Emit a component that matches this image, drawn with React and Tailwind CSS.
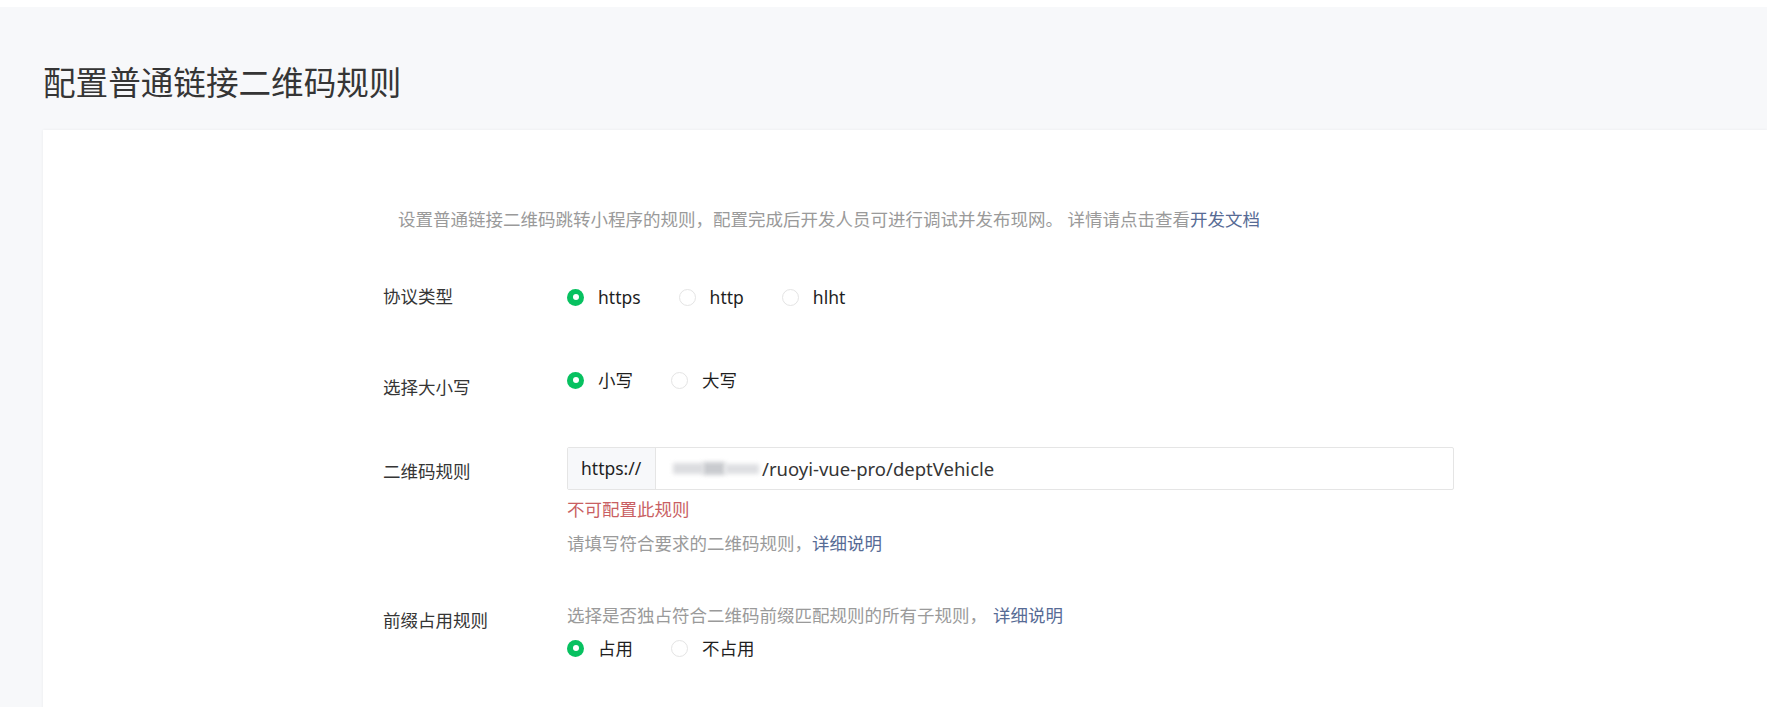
import React from "react";

const FONT = {
  fontFamily:
    '"Noto Sans", "Noto Sans CJK SC", "Microsoft YaHei", sans-serif',
};

function Radio({ checked, label }) {
  return (
    <label className="flex items-center gap-[14px] cursor-pointer">
      {checked ? (
        <span className="w-[17px] h-[17px] rounded-full bg-[#07c160] flex items-center justify-center">
          <span className="w-[6px] h-[6px] rounded-full bg-white" />
        </span>
      ) : (
        <span className="w-[17px] h-[17px] rounded-full border border-[#e4e4e4] bg-white" />
      )}
      <span className="text-[17.5px] leading-[24px] text-[#1f1f1f]">{label}</span>
    </label>
  );
}

function Label({ children, className = "" }) {
  return (
    <div
      className={
        "w-[184px] shrink-0 text-[17.5px] leading-[24px] text-[#353535] " +
        className
      }
    >
      {children}
    </div>
  );
}

export default function App() {
  return (
    <div className="bg-white min-h-screen" style={FONT}>
      <div className="mt-[7px] bg-[#f7f8fa] min-h-[700px] flex flex-col">
        <h1 className="pl-[43px] pt-[53px] text-[32.6px] leading-[46px] font-normal text-[#353535]">
          配置普通链接二维码规则
        </h1>
        <div className="ml-[43px] mt-[24px] flex-1 bg-white shadow-[0_0_3px_rgba(0,0,0,0.06)] pl-[340px] pt-[77px] pb-[60px]">
          <p className="ml-[15px] text-[17.5px] leading-[24px] text-[#9a9a9a]">
            设置普通链接二维码跳转小程序的规则，配置完成后开发人员可进行调试并发布现网。
            详情请点击查看<a className="text-[#576b95]">开发文档</a>
          </p>

          <div className="mt-[54px] flex items-center">
            <Label className="-mt-[3px]">协议类型</Label>
            <div className="flex items-center gap-[38px]">
              <Radio checked label="https" />
              <Radio label="http" />
              <Radio label="hlht" />
            </div>
          </div>

          <div className="mt-[59px] flex items-start">
            <Label className="mt-[7px]">选择大小写</Label>
            <div className="flex items-center gap-[38px]">
              <Radio checked label="小写" />
              <Radio label="大写" />
            </div>
          </div>

          <div className="mt-[48px] flex items-start">
            <Label className="mt-[12px]">二维码规则</Label>
            <div className="flex flex-col">
              <div className="w-[887px] h-[43px] flex border border-[#e5e5e5] rounded-[2px] bg-white">
                <div className="w-[88px] shrink-0 bg-[#f7f8fa] border-r border-[#e5e5e5] flex items-center pl-[13px] text-[17.5px] text-[#1f1f1f]">
                  https://
                </div>
                <div className="flex items-center pl-[13px] text-[18.5px] text-[#353535]">
                  <span className="relative inline-block w-[92px] h-[20px] mr-[1px]">
                    <span className="absolute left-[4px] top-[4px] w-[30px] h-[11px] bg-[#dcdde0] blur-[2px]" />
                    <span className="absolute left-[34px] top-[3px] w-[22px] h-[13px] bg-[#c9cbcf] blur-[2px]" />
                    <span className="absolute left-[56px] top-[5px] w-[34px] h-[10px] bg-[#dedfe2] blur-[2px]" />
                  </span>
                  <span>/ruoyi-vue-pro/deptVehicle</span>
                </div>
              </div>
              <div className="mt-[7px] text-[17.5px] leading-[24px] text-[#c95f63]">
                不可配置此规则
              </div>
              <div className="mt-[10px] text-[17.5px] leading-[24px] text-[#9a9a9a]">
                请填写符合要求的二维码规则，<a className="text-[#576b95]">详细说明</a>
              </div>
            </div>
          </div>

          <div className="mt-[48px] flex items-start">
            <Label className="mt-[5px]">前缀占用规则</Label>
            <div className="flex flex-col">
              <div className="text-[17.5px] leading-[24px] text-[#9a9a9a]">
                选择是否独占符合二维码前缀匹配规则的所有子规则，
                <a className="ml-[6px] text-[#576b95]">详细说明</a>
              </div>
              <div className="mt-[9px] flex items-center gap-[38px]">
                <Radio checked label="占用" />
                <Radio label="不占用" />
              </div>
            </div>
          </div>
        </div>
      </div>
    </div>
  );
}
